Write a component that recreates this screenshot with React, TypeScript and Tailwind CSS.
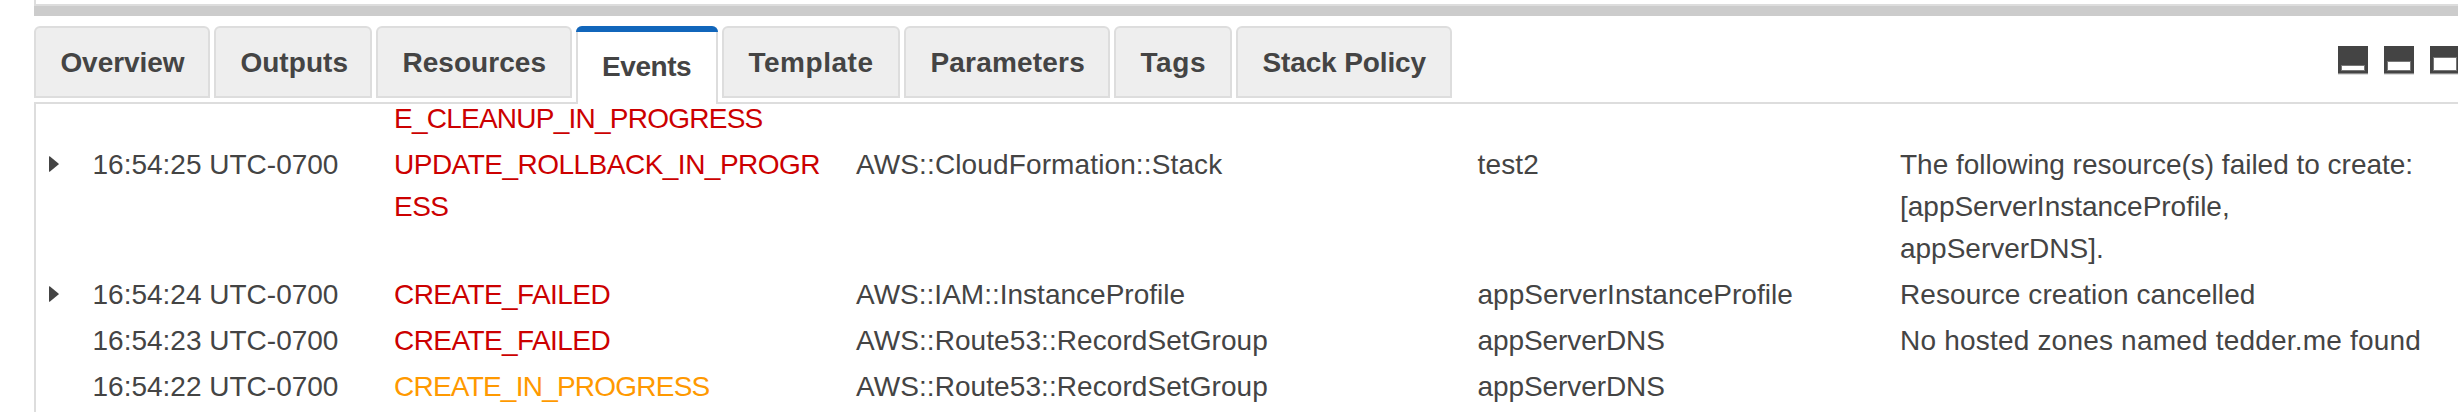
type Tab = { label: string; size: string; active?: boolean };

const tabs: Tab[] = [
  { label: "Overview", size: "w-[176px] tracking-[-0.049px]" },
  { label: "Outputs", size: "w-[158px] tracking-[0.05px]" },
  { label: "Resources", size: "w-[196px] tracking-[0.048px]" },
  { label: "Events", size: "w-[142px] tracking-[-0.43px]", active: true },
  { label: "Template", size: "w-[178px] tracking-[0.547px]" },
  { label: "Parameters", size: "w-[206px] tracking-[0.2px]" },
  { label: "Tags", size: "w-[118px] tracking-[0.6px]" },
  { label: "Stack Policy", size: "w-[216px] tracking-[-0.11px]" },
];

type Cell = { lines: string[]; style: string };
type Event = {
  expandable?: boolean;
  time: string;
  status: Cell;
  type: Cell;
  logicalId: Cell;
  reason: Cell;
};

const none: Cell = { lines: [], style: "" };

const events: Event[] = [
  {
    time: "",
    status: { lines: ["E_CLEANUP_IN_PROGRESS"], style: "text-[#cc0000] tracking-[-0.754px]" },
    type: none,
    logicalId: none,
    reason: none,
  },
  {
    expandable: true,
    time: "16:54:25 UTC-0700",
    status: { lines: ["UPDATE_ROLLBACK_IN_PROGR", "ESS"], style: "text-[#cc0000] tracking-[-0.51px]" },
    type: { lines: ["AWS::CloudFormation::Stack"], style: "tracking-[0.125px]" },
    logicalId: { lines: ["test2"], style: "tracking-[0.142px]" },
    reason: {
      lines: ["The following resource(s) failed to create:", "[appServerInstanceProfile,", "appServerDNS]."],
      style: "tracking-[-0.01px]",
    },
  },
  {
    expandable: true,
    time: "16:54:24 UTC-0700",
    status: { lines: ["CREATE_FAILED"], style: "text-[#cc0000] tracking-[-0.577px]" },
    type: { lines: ["AWS::IAM::InstanceProfile"], style: "tracking-[0.009px]" },
    logicalId: { lines: ["appServerInstanceProfile"], style: "tracking-[0.042px]" },
    reason: { lines: ["Resource creation cancelled"], style: "tracking-[0.08px]" },
  },
  {
    time: "16:54:23 UTC-0700",
    status: { lines: ["CREATE_FAILED"], style: "text-[#cc0000] tracking-[-0.577px]" },
    type: { lines: ["AWS::Route53::RecordSetGroup"], style: "tracking-[0.072px]" },
    logicalId: { lines: ["appServerDNS"], style: "tracking-[-0.084px]" },
    reason: { lines: ["No hosted zones named tedder.me found"], style: "tracking-[0.2px]" },
  },
  {
    time: "16:54:22 UTC-0700",
    status: { lines: ["CREATE_IN_PROGRESS"], style: "text-[#ff9900] tracking-[-0.77px]" },
    type: { lines: ["AWS::Route53::RecordSetGroup"], style: "tracking-[0.072px]" },
    logicalId: { lines: ["appServerDNS"], style: "tracking-[-0.084px]" },
    reason: none,
  },
];

function TabButton({ tab }: { tab: Tab }) {
  if (tab.active) {
    return (
      <div className={`h-[78px] shrink-0 overflow-hidden rounded-t-[6px] bg-[#dddddd] ${tab.size}`}>
        <div className="h-[6px] bg-[#1166bb]" />
        <div className="mx-[2px] h-[72px] bg-white pt-[14px] pl-[24px]">{tab.label}</div>
      </div>
    );
  }
  return (
    <div className={`h-[72px] shrink-0 rounded-t-[6px] border-2 border-[#dddddd] bg-[#eeeeee] pt-[14px] pl-[24.4px] ${tab.size}`}>
      {tab.label}
    </div>
  );
}

function PaneIcon({ top }: { top: number }) {
  return (
    <svg width="30" height="29" viewBox="0 0 30 29" className="shrink-0">
      <rect width="30" height="27" fill="#444444" />
      <rect y="27" width="30" height="1" fill="#8a8a8a" />
      <rect y="28" width="30" height="1" fill="#dddddd" />
      <rect x="3" y={top - 1} width="24" height={26 - top} fill="#777777" />
      <rect x="4" y={top} width="22" height={24 - top} fill="#ffffff" />
    </svg>
  );
}

function Lines({ cell }: { cell: Cell }) {
  return (
    <div className={`whitespace-nowrap ${cell.style}`}>
      {cell.lines.map((line) => (
        <div key={line}>{line}</div>
      ))}
    </div>
  );
}

export default function App() {
  return (
    <div className="flex h-[412px] w-[2458px] flex-col overflow-hidden bg-white pl-[34px] font-['Liberation_Sans',Arial,sans-serif] text-[28px] leading-[42px] text-[#444444]">
      <div className="h-[6px] shrink-0 border-b-2 border-l-2 border-[#dddddd]" />
      <div className="h-[10px] shrink-0 bg-[#cccccc]" />

      <div className="flex h-[88px] shrink-0 items-start pt-[10px]">
        <div className="z-10 flex gap-[4px] font-bold">
          {tabs.map((tab) => (
            <TabButton key={tab.label} tab={tab} />
          ))}
        </div>
        <div className="ml-[886px] flex gap-[16px] pt-[20px]">
          <PaneIcon top={20} />
          <PaneIcon top={16} />
          <PaneIcon top={12} />
        </div>
      </div>

      <div className="-mt-[2px] flex-1 overflow-hidden border-l-2 border-t-2 border-[#dddddd]">
        <div className="-mt-[6px] flex flex-col gap-[4px]">
          {events.map((event, i) => (
            <div
              key={i}
              className="grid grid-cols-[56.5px_301.5px_462px_621.5px_422.5px_556px]"
            >
              <div className="pt-[12px] pl-[13px]">
                {event.expandable && (
                  <svg width="10" height="16" viewBox="0 0 10 16">
                    <path d="M0 0.5 Q0 0 1 0.5 L9.5 7.4 Q10 8 9.5 8.6 L1 15.5 Q0 16 0 15.5Z" fill="#444444" />
                  </svg>
                )}
              </div>
              <div className="whitespace-nowrap">{event.time}</div>
              <Lines cell={event.status} />
              <Lines cell={event.type} />
              <Lines cell={event.logicalId} />
              <Lines cell={event.reason} />
            </div>
          ))}
        </div>
      </div>
    </div>
  );
}
